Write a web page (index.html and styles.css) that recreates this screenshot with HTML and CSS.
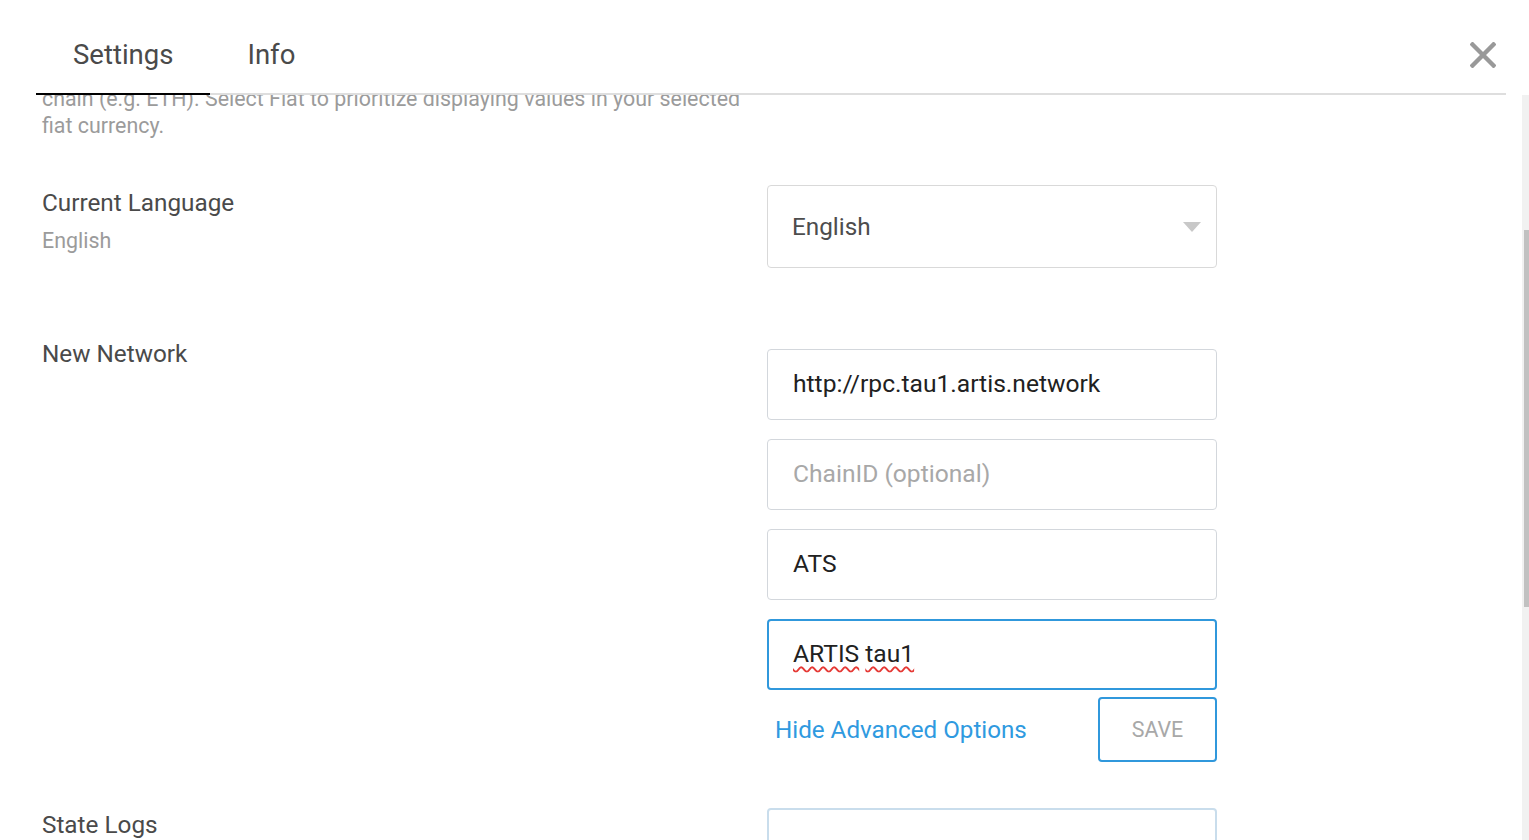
FILE: index.html
```html
<!DOCTYPE html>
<html lang="en">
<head>
<meta charset="utf-8">
<title>Settings</title>
<link rel="stylesheet" href="styles.css">
</head>
<body>
<div class="app">
  <header class="header">
    <nav class="tabs">
      <div class="tab tab-active">Settings</div>
      <div class="tab">Info</div>
    </nav>
    <button class="close" aria-label="Close">
      <svg width="26" height="26" viewBox="0 0 26 26"><path d="M2.5 2.5 L23.5 23.5 M23.5 2.5 L2.5 23.5" stroke="#999999" stroke-width="4.4" stroke-linecap="square" fill="none"/></svg>
    </button>
  </header>
  <div class="body">
    <main class="content">
      <p class="desc desc-top">chain (e.g. ETH). Select Fiat to prioritize displaying values in your selected fiat currency.</p>

      <section class="row row-lang">
        <div class="label-col">
          <div class="label">Current Language</div>
          <div class="sublabel">English</div>
        </div>
        <div class="field-col">
          <div class="select">
            <span>English</span>
            <span class="caret"></span>
          </div>
        </div>
      </section>

      <section class="row row-net">
        <div class="label-col">
          <div class="label">New Network</div>
        </div>
        <div class="field-col field-col-net">
          <input class="input" type="text" value="http://rpc.tau1.artis.network">
          <input class="input" type="text" placeholder="ChainID (optional)">
          <input class="input" type="text" value="ATS">
          <div class="input input-focus"><span class="value"><span class="misspelt">ARTIS</span> <span class="misspelt">tau1</span></span></div>
          <div class="actions">
            <a class="link" href="#">Hide Advanced Options</a>
            <button class="save">SAVE</button>
          </div>
        </div>
      </section>

      <section class="row row-logs">
        <div class="label-col">
          <div class="label">State Logs</div>
        </div>
        <div class="field-col">
          <div class="logs-box"></div>
        </div>
      </section>
    </main>
    <div class="scrollbar"><div class="thumb"></div></div>
  </div>
</div>
</body>
</html>
```

FILE: styles.css
```css
* { box-sizing: border-box; }
html, body { margin: 0; padding: 0; }
body {
  background: #fff;
  font-family: Roboto, "Liberation Sans", sans-serif;
  color: #4a4a4a;
  width: 1529px;
  height: 840px;
  overflow: hidden;
}
.app { display: flex; flex-direction: column; height: 840px; }

.header {
  display: flex;
  align-items: flex-start;
  justify-content: space-between;
  height: 95px;
  margin: 0 23px 0 36px;
  padding-right: 10px;
  border-bottom: 2px solid #dedede;
  flex: none;
}
.tabs { display: flex; }
.tab {
  font-size: 27.5px;
  line-height: 32px;
  padding: 39px 37px 22px;
  color: #4a4a4a;
  margin-bottom: -2px;
  border-bottom: 2px solid transparent;
}
.tab-active { border-bottom-color: #000; }
.close {
  margin-top: 42px;
  padding: 0;
  border: 0;
  background: none;
  width: 26px;
  height: 26px;
  display: block;
}
.close svg { display: block; }

.body { display: flex; flex: 1; min-height: 0; }
.content {
  flex: 1;
  overflow: hidden;
  padding-left: 42px;
}
.scrollbar {
  width: 7px;
  flex: none;
  background: #f1f1f1;
  display: flex;
  flex-direction: column;
  align-items: flex-end;
}
.thumb { width: 5px; height: 377px; margin-top: 135px; background: #c1c1c1; }

.desc {
  font-size: 21.4px;
  line-height: 27px;
  color: #9b9b9b;
  width: 720px;
  margin: 0;
}
.desc-top { margin-top: -10px; }

.row { display: grid; grid-template-columns: 725px 450px; }
.row-lang { margin-top: 46px; }
.row-net { margin-top: 70px; }
.row-logs { margin-top: 46px; }

.label { font-size: 24.3px; line-height: 30px; color: #4a4a4a; margin-top: 3px; }
.row-net .label { margin-top: 1px; }
.row-logs .label { margin-top: 2px; }
.sublabel { font-size: 21.4px; line-height: 27px; color: #9b9b9b; margin-top: 9px; }

.select {
  height: 83px;
  border: 1px solid #d9d9d9;
  border-radius: 4px;
  display: flex;
  align-items: center;
  justify-content: space-between;
  padding: 0 15px 0 24px;
  font-size: 24.3px;
  color: #4d4d4d;
}
.caret {
  width: 0; height: 0;
  border-left: 9.5px solid transparent;
  border-right: 9.5px solid transparent;
  border-top: 10px solid #c8c8c8;
}

.field-col-net { padding-top: 11px; display: flex; flex-direction: column; gap: 19px; }
.input {
  display: flex;
  align-items: center;
  width: 450px;
  height: 71px;
  border: 1px solid #d3d7dc;
  border-radius: 4px;
  padding: 0 0 3px 25px;
  font-family: Roboto, "Liberation Sans", sans-serif;
  font-size: 24.6px;
  color: #212121;
  background: #fff;
  outline: none;
}
.input::placeholder { color: #a8a8a8; }
.input-focus { border: 2px solid #3098dc; padding-left: 24px; }
.value { white-space: pre; }
.misspelt { text-decoration: underline wavy #e53935; text-decoration-thickness: 1.5px; text-underline-offset: 4px; }

.actions {
  display: flex;
  align-items: center;
  justify-content: space-between;
  margin-top: -12px;
}
.link {
  font-size: 24.2px;
  color: #2f9ae0;
  text-decoration: none;
  margin-left: 8px;
}
.save {
  width: 119px;
  height: 65px;
  border: 2px solid #3098dc;
  border-radius: 4px;
  background: #fff;
  font-family: Roboto, "Liberation Sans", sans-serif;
  font-size: 21.4px;
  color: #a8a8a8;
  padding: 0;
}

.logs-box {
  height: 70px;
  border: 2px solid #c9ddec;
  border-radius: 4px;
}
```
